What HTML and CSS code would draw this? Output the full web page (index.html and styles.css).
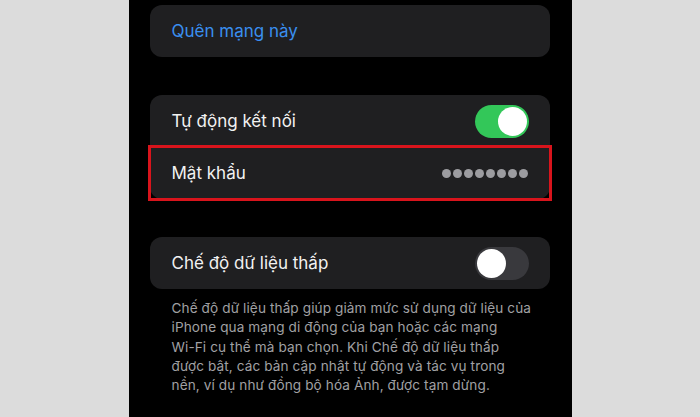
FILE: index.html
```html
<!DOCTYPE html>
<html lang="vi">
<head>
<meta charset="utf-8">
<link rel="stylesheet" href="styles.css">
</head>
<body>
<div class="page">
  <div class="side"></div>
  <div class="screen">
    <div class="card">
      <div class="row"><span class="link">Quên mạng này</span></div>
    </div>
    <div class="card">
      <div class="row">
        <span class="label">Tự động kết nối</span>
        <span class="toggle on"><span class="knob"></span></span>
      </div>
      <div class="row highlighted">
        <span class="label">Mật khẩu</span>
        <span class="dots"><i></i><i></i><i></i><i></i><i></i><i></i><i></i><i></i></span>
      </div>
    </div>
    <div class="card">
      <div class="row">
        <span class="label">Chế độ dữ liệu thấp</span>
        <span class="toggle off"><span class="knob"></span></span>
      </div>
    </div>
    <p class="note">Chế độ dữ liệu thấp giúp giảm mức sử dụng dữ liệu của<br>iPhone qua mạng di động của bạn hoặc các mạng<br>Wi-Fi cụ thể mà bạn chọn. Khi Chế độ dữ liệu thấp<br>được bật, các bản cập nhật tự động và tác vụ trong<br>nền, ví dụ như đồng bộ hóa Ảnh, được tạm dừng.</p>
  </div>
  <div class="side"></div>
</div>
</body>
</html>
```

FILE: styles.css
```css
html, body {
  margin: 0;
  padding: 0;
  width: 700px;
  height: 417px;
  overflow: hidden;
  background: #dcdcdc;
  font-family: Inter, "Noto Sans", "Liberation Sans", sans-serif;
}
.page {
  display: flex;
  height: 417px;
}
.side {
  flex: 1;
  background: #dcdcdc;
}
.screen {
  width: 443px;
  flex: none;
  background: #000;
  padding: 5px 22px 0 21px;
  box-sizing: border-box;
  display: flex;
  flex-direction: column;
  gap: 38px;
}
.card {
  background: #1f1f21;
  border-radius: 12px;
  display: flex;
  flex-direction: column;
}
.row {
  height: 52px;
  display: flex;
  align-items: center;
  justify-content: space-between;
  padding: 0 21px 0 22px;
  box-sizing: border-box;
}
.link {
  color: #3a8ff0;
  font-size: 17px;
}
.label {
  color: #f2f2f2;
  font-size: 17px;
}
.highlighted {
  outline: 3px solid #d8141c;
  outline-offset: -1px;
  padding-right: 22px;
}
.toggle {
  width: 54px;
  height: 33px;
  border-radius: 17px;
  display: flex;
  align-items: center;
  padding: 0 2px;
  box-sizing: border-box;
}
.toggle.on {
  background: #33c759;
  justify-content: flex-end;
}
.toggle.off {
  background: #39393d;
  justify-content: flex-start;
}
.knob {
  width: 29px;
  height: 29px;
  border-radius: 50%;
  background: #fff;
}
.dots {
  display: flex;
  gap: 2px;
}
.dots i {
  width: 9px;
  height: 9px;
  border-radius: 50%;
  background: #9c9ca0;
}
.note {
  margin: -28px 0 0 0;
  padding: 0 22px;
  color: #a0a0a4;
  font-size: 13.6px;
  letter-spacing: 0.1px;
  line-height: 19.3px;
  white-space: nowrap;
}
```
